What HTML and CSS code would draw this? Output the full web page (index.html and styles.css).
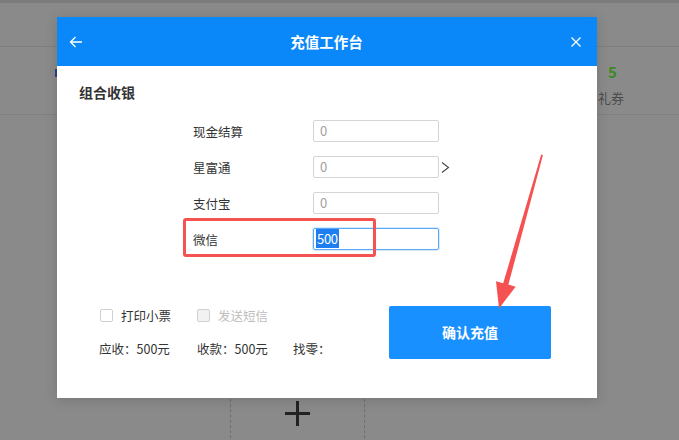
FILE: index.html
```html
<!DOCTYPE html>
<html>
  <head>
    <title>充值工作台</title>
    <link rel="stylesheet" href="styles.css">
  </head>

  <body>
    <!-- page behind the mask -->
    <div class="page">
      <div class="top-line"></div>
      <div class="nav"></div>
      <div class="stats">
        <span class="peek"></span>
        <div class="stat">
          <span class="stat-num">5</span>
          <span class="stat-name">礼券</span>
        </div>
      </div>
      <div class="cards">
        <div class="add-card">
          <span class="plus"></span>
        </div>
      </div>
    </div>

    <!-- recharge dialog -->
    <div class="modal">
      <div class="modal-head">
        <svg class="head-icon" width="14" height="12" viewBox="0 0 14 12">
          <path d="M13 6H1.5M6.5 1L1.5 6l5 5" fill="none" stroke="#fff" stroke-width="1.3"/>
        </svg>
        <span class="modal-title">充值工作台</span>
        <svg class="head-icon" width="12" height="12" viewBox="0 0 12 12">
          <path d="M1.5 1.5l9 9M10.5 1.5l-9 9" fill="none" stroke="#fff" stroke-width="1.3"/>
        </svg>
      </div>

      <div class="modal-body">
        <div class="section-title">组合收银</div>

        <div class="pay-rows">
          <div class="pay-row">
            <span class="pay-label">现金结算</span>
            <div class="field">0</div>
          </div>
          <div class="pay-row">
            <span class="pay-label">星富通</span>
            <div class="field">0</div>
            <svg class="chevron" width="9" height="13" viewBox="0 0 9 13">
              <path d="M1 1.5l6.5 5-6.5 5" fill="none" stroke="#444" stroke-width="1.1"/>
            </svg>
          </div>
          <div class="pay-row">
            <span class="pay-label">支付宝</span>
            <div class="field">0</div>
          </div>
          <div class="pay-row">
            <span class="pay-label">微信</span>
            <div class="field field-focus"><span class="selected">500</span></div>
          </div>
        </div>

        <div class="footer">
          <div class="summary">
            <label class="check"><span class="box"></span>打印小票</label>
            <label class="check check-off"><span class="box"></span>发送短信</label>
            <span></span>
            <span>应收：500元</span>
            <span>收款：500元</span>
            <span>找零：</span>
          </div>
          <button class="confirm">确认充值</button>
        </div>

        <!-- annotation box -->
        <div class="mark-box"></div>
      </div>
    </div>

    <!-- annotation arrow -->
    <svg class="mark-arrow" width="679" height="440" viewBox="0 0 679 440">
      <polygon points="541.2,154.6 542.9,155.2 508.4,284.6 515.6,286.8 499,308.5 496,281.2 503.2,283.2" fill="#f65151"/>
    </svg>
  </body>
</html>
```

FILE: styles.css
```css
body {
  margin: 0;
  width: 679px;
  height: 440px;
  overflow: hidden;
  position: relative;
  background: #8a8a8a;
  font-family: "Noto Sans CJK SC", "Noto Sans", sans-serif;
  color: #333;
}

/* background page, already dimmed */
.page {
  display: flex;
  flex-direction: column;
}

.top-line {
  height: 3px;
  background: #7c7c7c;
}

.nav {
  height: 43px;
  border-bottom: 1px solid #7e7e7e;
}

.stats {
  height: 67px;
  border-bottom: 1px solid #808080;
  display: flex;
  align-items: flex-start;
}

.peek {
  width: 2px;
  height: 8px;
  margin: 22px 0 0 55px;
  background: #2d3f86;
}

.stat {
  display: flex;
  flex-direction: column;
  align-items: center;
  margin-left: 541px;
  padding-top: 16px;
}

.stat-num {
  font-size: 15px;
  font-weight: bold;
  line-height: 18px;
  color: #3a8a1c;
  margin-left: 3px;
}

.stat-name {
  font-size: 13px;
  line-height: 20px;
  margin-top: 7px;
  color: #4a4a4a;
}

.cards {
  display: flex;
  padding-top: 284px;
}

.add-card {
  width: 133px;
  height: 60px;
  margin-left: 230px;
  border-left: 1px dashed #6f6f6f;
  border-right: 1px dashed #6f6f6f;
  position: relative;
}

.plus {
  position: absolute;
  left: 54px;
  top: 2px;
  width: 25px;
  height: 25px;
  background:
    linear-gradient(#222, #222) center / 25px 3px no-repeat,
    linear-gradient(#222, #222) center / 3px 25px no-repeat;
}

/* dialog */
.modal {
  position: absolute;
  left: 57px;
  top: 17px;
  width: 540px;
  height: 381px;
  background: #fff;
  box-shadow: 0 2px 12px rgba(0, 0, 0, 0.15);
  display: flex;
  flex-direction: column;
}

.modal-head {
  height: 49px;
  background: #0a88f9;
  display: flex;
  align-items: center;
  justify-content: space-between;
  padding: 0 15px 0 12px;
  color: #fff;
}

.head-icon {
  display: block;
}

.modal-title {
  font-size: 14.5px;
  font-weight: bold;
}

.modal-body {
  flex: 1;
  position: relative;
  padding: 16px 22px 0;
}

.section-title {
  font-size: 14px;
  font-weight: bold;
  line-height: 20px;
  color: #333;
}

.pay-rows {
  display: flex;
  flex-direction: column;
  gap: 14px;
  margin: 18px 0 0 114px;
}

.pay-row {
  display: flex;
  align-items: center;
  height: 22px;
}

.pay-label {
  width: 120px;
  font-size: 12.5px;
  color: #333;
}

.field {
  width: 126px;
  height: 22px;
  box-sizing: border-box;
  border: 1px solid #d4d4d4;
  border-radius: 2px;
  padding-left: 6px;
  font-size: 13px;
  line-height: 20px;
  color: #a0a0a0;
}

.field-focus {
  border-color: #5aaaf8;
  box-shadow: 0 0 0 1px #d6eafd;
  padding-left: 2px;
  color: #fff;
}

.selected {
  display: inline-block;
  line-height: 19px;
  background: #1e7ef0;
  padding: 0 1px;
  letter-spacing: -0.3px;
}

.chevron {
  margin-left: 2px;
}

.footer {
  display: flex;
  align-items: center;
  margin-top: 55px;
  padding-left: 21px;
}

.summary {
  display: grid;
  grid-template-columns: 97px 96px 96px;
  row-gap: 12px;
  font-size: 12.5px;
  line-height: 21px;
  color: #333;
}

.check {
  display: flex;
  align-items: center;
  gap: 8px;
  color: #333;
}

.box {
  width: 13px;
  height: 13px;
  box-sizing: border-box;
  border: 1px solid #d0d0d0;
  border-radius: 2px;
  background: #fff;
}

.check-off {
  color: #bdbdbd;
}

.check-off .box {
  background: #f2f2f2;
}

.summary span:nth-child(4) {
  margin-left: -1px;
}

.confirm {
  margin-left: auto;
  margin-right: 24px;
  width: 162px;
  height: 53px;
  border: none;
  border-radius: 2px;
  background: #1990ff;
  color: #fff;
  font-family: inherit;
  font-size: 14px;
  font-weight: bold;
}

.mark-box {
  position: absolute;
  left: 126px;
  top: 152px;
  width: 193px;
  height: 39px;
  box-sizing: border-box;
  border: 3px solid #f55252;
  border-radius: 3px;
}

.mark-arrow {
  position: absolute;
  left: 0;
  top: 0;
  pointer-events: none;
}
```
